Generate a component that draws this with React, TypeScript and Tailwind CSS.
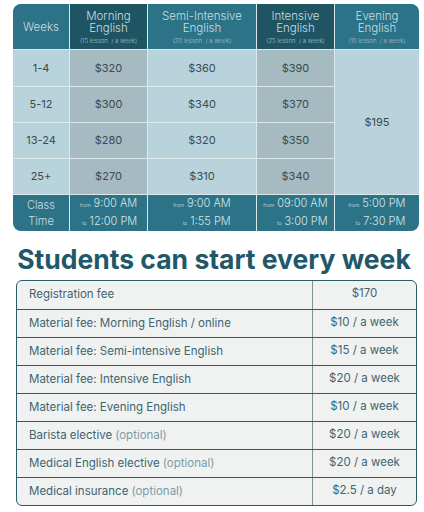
import React from 'react';

const font = { fontFamily: 'Inter, "Noto Sans", sans-serif' };

type Head = { title: string; sub?: string; dark?: boolean };

const heads: Head[] = [
  { title: 'Weeks' },
  { title: 'Morning English', sub: '(15 lesson  / a week)', dark: true },
  { title: 'Semi-Intensive English', sub: '(20 lesson  / a week)' },
  { title: 'Intensive English', sub: '(25 lesson  / a week)', dark: true },
  { title: 'Evening English', sub: '(10 lesson  / a week)' },
];

const rows = [
  ['1-4', '$320', '$360', '$390'],
  ['5-12', '$300', '$340', '$370'],
  ['13-24', '$280', '$320', '$350'],
  ['25+', '$270', '$310', '$340'],
];

const times = [
  ['9:00 AM', '12:00 PM'],
  ['9:00 AM', '1:55 PM'],
  ['09:00 AM', '3:00 PM'],
  ['5:00 PM', '7:30 PM'],
];

const fees: [string, string | null, string][] = [
  ['Registration fee', null, '$170'],
  ['Material fee: Morning English / online', null, '$10 / a week'],
  ['Material fee: Semi-intensive English', null, '$15 / a week'],
  ['Material fee: Intensive English', null, '$20 / a week'],
  ['Material fee: Evening English', null, '$10 / a week'],
  ['Barista elective', '(optional)', '$20 / a week'],
  ['Medical English elective', '(optional)', '$20 / a week'],
  ['Medical insurance', '(optional)', '$2.5 / a day'],
];

function TimeCell({ from, to }: { from: string; to: string }) {
  return (
    <div className="bg-[#2c7387] flex items-center justify-center">
      <div className="flex flex-col items-end text-[11px] leading-[16px] text-[#d6e6ea] font-light">
        <span>
          <span className="text-[5px] mr-[3px]">from</span>
          {from}
        </span>
        <span>
          <span className="text-[5px] mr-[3px]">to</span>
          {to}
        </span>
      </div>
    </div>
  );
}

export default function App() {
  return (
    <div className="w-[424px] h-[512px] bg-white overflow-hidden" style={font}>
      <div className="pt-[4px] pl-[13px]">
        <div className="w-[406px] grid grid-cols-[56px_77px_108px_77px_84px] grid-rows-[45px_36px_35px_35px_35px_36px] gap-px bg-[#dde8eb] rounded-lg overflow-hidden">
          {heads.map((h, i) => (
            <div
              key={i}
              className={`${h.dark ? 'bg-[#1f5463]' : 'bg-[#2c7387]'} flex flex-col items-center justify-center text-[#c9dee4] font-light`}
            >
              <p className="w-full px-[4px] text-[11.5px] leading-[12px] text-center">{h.title}</p>
              {h.sub && (
                <span className="text-[6px] leading-[7px] mt-[3px] text-[#a9c6ce] whitespace-pre">{h.sub}</span>
              )}
            </div>
          ))}
          {rows.map((r, ri) => (
            <React.Fragment key={ri}>
              {r.map((c, ci) => (
                <div
                  key={ci}
                  className={`${ci === 1 || ci === 3 ? 'bg-[#a5bbc1]' : 'bg-[#b9d3dc]'} flex items-center justify-center text-[11px] text-[#3a4a50]`}
                >
                  {c}
                </div>
              ))}
              {ri === 0 && (
                <div className="row-span-4 bg-[#b9d3dc] flex items-center justify-center text-[11px] text-[#3a4a50]">
                  $195
                </div>
              )}
            </React.Fragment>
          ))}
          <div className="bg-[#2c7387] flex flex-col items-center justify-center text-[11px] leading-[16px] text-[#c9dee4] font-light">
            <span>Class</span>
            <span>Time</span>
          </div>
          {times.map((t, i) => (
            <TimeCell key={i} from={t[0]} to={t[1]} />
          ))}
        </div>
      </div>

      <h2 className="mt-[10px] pl-[4px] text-center text-[26.5px] leading-[36px] font-bold text-[#1f5868]">
        Students can start every week
      </h2>

      <div className="mt-[3px] ml-[16px] w-[401px] border border-[#2b5c6b] rounded-md overflow-hidden bg-[#f0f2f2]">
        {fees.map(([label, opt, price], i) => (
          <div
            key={i}
            className={`flex h-[28px] ${i > 0 ? 'border-t border-[#2b5c6b]' : ''}`}
          >
            <div className="flex-1 flex items-center pl-[12px] text-[11.5px] text-[#3e6470]">
              {label}
              {opt && <span className="ml-[3px] text-[#7f9aa2]">{opt}</span>}
            </div>
            <div className="w-[104px] border-l border-[#7e929a] flex items-center justify-center text-[11.5px] text-[#3e6470] pb-[2px]">
              {price}
            </div>
          </div>
        ))}
      </div>
    </div>
  );
}
